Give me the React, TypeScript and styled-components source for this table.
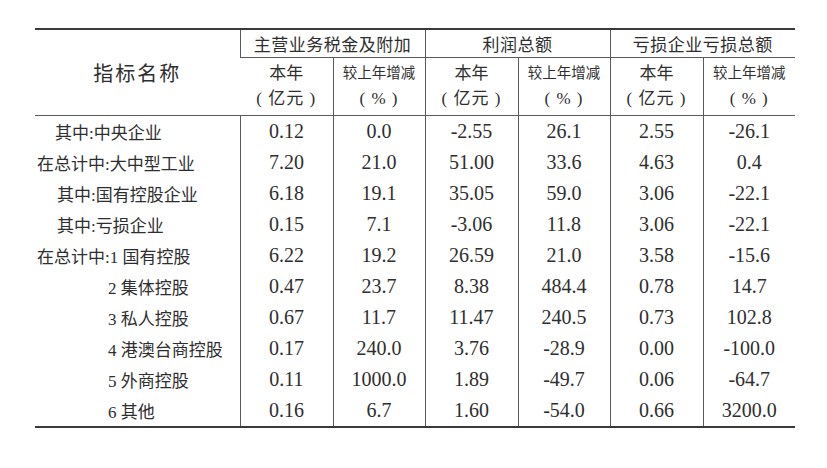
import React from 'react';
import styled, { createGlobalStyle } from 'styled-components';

const GlobalStyle = createGlobalStyle`
  html, body {
    margin: 0;
    padding: 0;
    background: #fff;
  }
  body {
    font-family: "Liberation Serif", "Noto Sans CJK SC", serif;
    color: #2e2e2e;
  }
`;

interface Row {
  label: string;
  indent: number;
  values: string[];
}

const rows: Row[] = [
  { label: '其中:中央企业', indent: 20, values: ['0.12', '0.0', '-2.55', '26.1', '2.55', '-26.1'] },
  { label: '在总计中:大中型工业', indent: 2, values: ['7.20', '21.0', '51.00', '33.6', '4.63', '0.4'] },
  { label: '其中:国有控股企业', indent: 22, values: ['6.18', '19.1', '35.05', '59.0', '3.06', '-22.1'] },
  { label: '其中:亏损企业', indent: 22, values: ['0.15', '7.1', '-3.06', '11.8', '3.06', '-22.1'] },
  { label: '在总计中:1 国有控股', indent: 2, values: ['6.22', '19.2', '26.59', '21.0', '3.58', '-15.6'] },
  { label: '2 集体控股', indent: 73, values: ['0.47', '23.7', '8.38', '484.4', '0.78', '14.7'] },
  { label: '3 私人控股', indent: 73, values: ['0.67', '11.7', '11.47', '240.5', '0.73', '102.8'] },
  { label: '4 港澳台商控股', indent: 73, values: ['0.17', '240.0', '3.76', '-28.9', '0.00', '-100.0'] },
  { label: '5 外商控股', indent: 73, values: ['0.11', '1000.0', '1.89', '-49.7', '0.06', '-64.7'] },
  { label: '6 其他', indent: 73, values: ['0.16', '6.7', '1.60', '-54.0', '0.66', '3200.0'] },
];

const groups = ['主营业务税金及附加', '利润总额', '亏损企业亏损总额'];

const Page = styled.div`
  padding: 28px 0 0 35px;
`;

const Table = styled.table`
  width: 760px;
  table-layout: fixed;
  border-collapse: collapse;
  border-top: 2px solid #3a3a3a;
  border-bottom: 2px solid #3a3a3a;
`;

const Cell = styled.td`
  padding: 0;
  font-weight: normal;
  border-left: 1px solid #5a5a5a;
  text-align: center;
  vertical-align: middle;
  &:first-child {
    border-left: none;
  }
`;

const NameHead = styled(Cell)`
  font-family: "Noto Sans CJK SC", sans-serif;
  font-size: 20px;
  letter-spacing: 2px;
  border-bottom: 1px solid #5a5a5a;
`;

const GroupHead = styled(Cell)`
  height: 27px;
  font-family: "Noto Sans CJK SC", sans-serif;
  font-size: 17px;
  letter-spacing: 0.5px;
  border-bottom: 1px solid #5a5a5a;
`;

const SubHead = styled(Cell)`
  height: 55px;
  padding-bottom: 2px;
  border-bottom: 1px solid #5a5a5a;
`;

const SubLine = styled.div<{ $small?: boolean }>`
  font-family: "Liberation Serif", "Noto Sans CJK SC", serif;
  font-size: ${(p) => (p.$small ? '14.5px' : '17px')};
  line-height: 25px;
`;

const Unit = styled(SubLine)`
  font-size: 17px;
  letter-spacing: 1px;
`;

const LabelCell = styled(Cell)<{ $indent: number }>`
  height: 31px;
  text-align: left;
  padding-left: ${(p) => p.$indent}px;
  font-size: 17px;
  white-space: nowrap;
`;

const NumCell = styled(Cell)`
  font-size: 20px;
`;

export default function App() {
  return (
    <>
      <GlobalStyle />
      <Page>
        <Table>
          <colgroup>
            <col style={{ width: 205 }} />
            {Array.from({ length: 6 }).map((_, i) => (
              <col key={i} style={{ width: i % 2 === 0 ? 93 : 92 }} />
            ))}
          </colgroup>
          <thead>
            <tr>
              <NameHead as="th" rowSpan={2}>指标名称</NameHead>
              {groups.map((g) => (
                <GroupHead as="th" key={g} colSpan={2}>
                  {g}
                </GroupHead>
              ))}
            </tr>
            <tr>
              {groups.map((g) => (
                <React.Fragment key={g}>
                  <SubHead as="th">
                    <SubLine>本年</SubLine>
                    <Unit>( 亿元 )</Unit>
                  </SubHead>
                  <SubHead as="th">
                    <SubLine $small>较上年增减</SubLine>
                    <Unit>( % )</Unit>
                  </SubHead>
                </React.Fragment>
              ))}
            </tr>
          </thead>
          <tbody>
            {rows.map((r) => (
              <tr key={r.label}>
                <LabelCell $indent={r.indent}>{r.label}</LabelCell>
                {r.values.map((v, i) => (
                  <NumCell key={i}>{v}</NumCell>
                ))}
              </tr>
            ))}
          </tbody>
        </Table>
      </Page>
    </>
  );
}
